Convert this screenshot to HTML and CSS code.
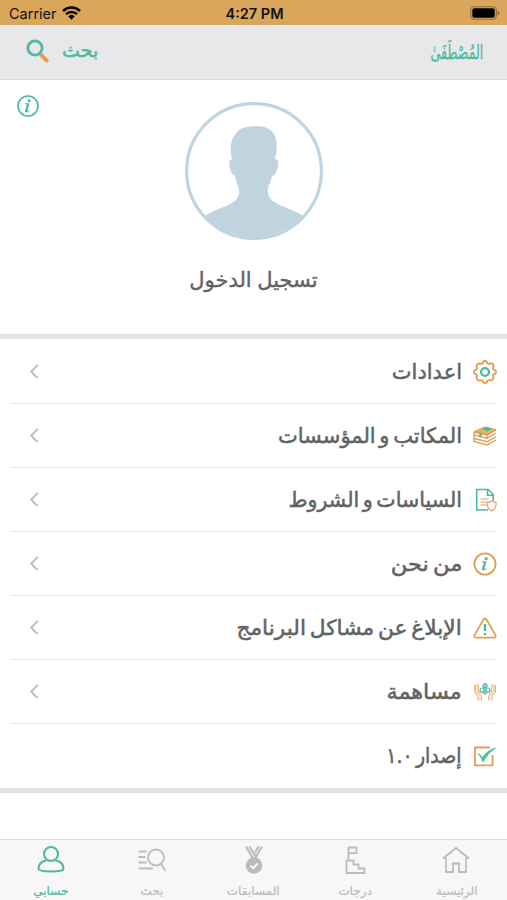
FILE: index.html
```
<!DOCTYPE html>
<html lang="ar" dir="rtl">
<head>
    <meta charset="UTF-8">
    <meta name="viewport" content="width=device-width, initial-scale=1.0">
    <title>حسابي</title>
    <link rel="stylesheet" href="styles.css">
</head>
<body>
    <div class="app">
        <div class="status-bar" dir="ltr">
            <div class="carrier">
                <span>Carrier</span>
                <svg width="19" height="14" viewBox="0 0 19 14">
                    <path d="M1 5a12.2 12.2 0 0 1 17 0M4 8.2a8 8 0 0 1 11 0" fill="none" stroke="#000" stroke-width="2.5"/>
                    <path d="M6.2 10.3a4.8 4.8 0 0 1 6.6 0L9.5 13.7z"/>
                </svg>
            </div>
            <div class="time">4:27 PM</div>
            <div class="battery">
                <svg width="30" height="14" viewBox="0 0 30 14">
                    <rect x=".7" y=".7" width="25.6" height="12.6" rx="3.6" fill="none" stroke="#8c6c3a" stroke-width="1.1"/>
                    <rect x="2.3" y="2.3" width="22.4" height="9.4" rx="2"/>
                    <path d="M27.5 4.8q2 .8 2 2.2t-2 2.2z" fill="#8c6c3a"/>
                </svg>
            </div>
        </div>

        <div class="header">
            <div class="logo">المُصْطَفَىٰ</div>
            <div class="search">
                <span>بحث</span>
                <svg width="24" height="25" viewBox="0 0 24 25">
                    <path d="M14.8 15.6l6 6" stroke="#e0a052" stroke-width="4" stroke-linecap="round"/>
                    <circle cx="9" cy="9" r="7.1" fill="none" stroke="#4dba9f" stroke-width="2.8"/>
                </svg>
            </div>
        </div>

        <div class="profile">
            <svg class="info" width="24" height="24" viewBox="0 0 24 24">
                <circle cx="12" cy="12" r="10" fill="none" stroke="#4dba9f" stroke-width="1.6"/>
                <path d="M9 9.300h4.600l-2.100 7q-.1.800.6.500l1.600-1-.4 1c-1.500 1.900-4.600 2.300-4.300 0l1.800-6.400-1.900-.3z" fill="#4dba9f"/>
                <circle cx="13.200" cy="6.700" r="1.500" fill="#4dba9f"/>
            </svg>
            <svg class="avatar" width="138" height="138" viewBox="0 0 138 138">
                <circle cx="69" cy="69" r="67.4" fill="#fff" stroke="#c0d4df" stroke-width="3.2"/>
                <path d="M20 114C32 105 52 104 54 92C55 85 51 82 50 74C45 73 43 60 45 58L47 57C45 49 45 38 50 33C52 28 58 25 66 24.500C75 23 85 25 89 32C93 38 92 49 90 57L93 58C94 62 92 73 87 74C86 81 82 84 83 91C85 104 106 105 118 114A67.400 67.400 0 0 1 20 114Z" fill="#c0d4df"/>
            </svg>
            <div class="login"><span>تسجيل الدخول</span></div>
        </div>

        <div class="menu">
            <div class="row">
                <svg class="icon" viewBox="0 0 24 24">
                    <path d="M9.800 3.200Q10 1 12 1T14.200 3.200L16 4Q17.900 2.400 19.600 4T20 8l.8 1.800Q23 10 23 12T20.800 14.200L20 16Q21.300 18 19.600 19.600T16 20l-1.800.8Q14 23 12 23T9.800 20.800L8 20Q6.100 21.300 4.400 19.600T4 16l-.8-1.800Q1 14 1 12T3.200 9.800L4 8Q2.700 6 4.400 4.400T8 4Z" class="o"/>
                    <circle cx="12" cy="12" r="3.900" class="g thick"/>
                </svg>
                <span class="label">اعدادات</span>
                <svg class="arrow" viewBox="0 0 10 16"><path d="M9 1L2 8l7 7"/></svg>
            </div>
            <div class="row">
                <svg class="icon" viewBox="0 0 24 24">
                    <path d="M1 7.500L12 3l11 2.500-9 5z" fill="#e8b369" stroke="#e0a052"/>
                    <path d="M9 5l5-2 5 2-5 2.500z" fill="#4dba9f"/>
                    <path d="M1 8v3l13 3.300L23 9M1 11.500v3l13 3.300 9-5M1 15v2.500L14 21l9-5M14 10.500v3.500M1 8l13 3 9-5" class="o books"/>
                    <path d="M7.500 9v4" class="g thick"/>
                </svg>
                <span class="label">المكاتب و المؤسسات</span>
                <svg class="arrow" viewBox="0 0 10 16"><path d="M9 1L2 8l7 7"/></svg>
            </div>
            <div class="row">
                <svg class="icon" viewBox="0 0 24 24">
                    <path d="M15 22H3.700V1.500h11.500l5 5V13M14.500 2v5.300h5" class="g"/>
                    <path d="M7.500 11h8M7.500 14h7M7.500 17h6" class="o thin"/>
                    <path d="M18.700 12.800q2 1.700 4.300 1.700.8 6-4.300 8.500-5.100-2.500-4.300-8.500 2.300 0 4.300-1.700z" fill="#fff" stroke="#e9a568" stroke-width="1.300"/>
                </svg>
                <span class="label terms">السياسات و الشروط</span>
                <svg class="arrow" viewBox="0 0 10 16"><path d="M9 1L2 8l7 7"/></svg>
            </div>
            <div class="row">
                <svg class="icon" viewBox="0 0 24 24">
                    <circle cx="12" cy="12" r="10.600" class="o"/>
                    <path d="M9 9.300h4.600l-2.100 7q-.1.800.6.500l1.600-1-.4 1c-1.500 1.900-4.600 2.300-4.300 0l1.800-6.400-1.900-.3z" fill="#4dba9f"/>
                    <circle cx="13.200" cy="6.700" r="1.600" fill="#4dba9f"/>
                </svg>
                <span class="label about">من نحن</span>
                <svg class="arrow" viewBox="0 0 10 16"><path d="M9 1L2 8l7 7"/></svg>
            </div>
            <div class="row">
                <svg class="icon" viewBox="0 0 24 24">
                    <path d="M10.500 3.500q1.500-2 3 0l9 15.500q.8 2.500-1.500 2.700H3q-2.300-.2-1.500-2.700z" class="o"/>
                    <path d="M12 8v7M12 17v2.200" class="g thick"/>
                </svg>
                <span class="label report">الإبلاغ عن مشاكل البرنامج</span>
                <svg class="arrow" viewBox="0 0 10 16"><path d="M9 1L2 8l7 7"/></svg>
            </div>
            <div class="row">
                <svg class="icon" viewBox="0 0 24 24">
                    <path d="M5 20.500v-4L1.500 12V5.500q1.300-1 1.500.5v4.500L5.500 13l2 1.500q1.500 1.500 1 6M5.300 12V5q-1.300-1-2 0M5.500 11l3 2.500M19 20.500v-4l3.500-4.500V5.500q-1.300-1-1.500.5v4.500L18.500 13l-2 1.500q-1.500 1.500-1 6M18.700 12V5q1.300-1 2 0M18.500 11l-3 2.500" fill="#fae8d1" stroke="#e6b679" stroke-width="1"/>
                    <circle cx="12" cy="5.500" r="2" class="g thin"/>
                    <circle cx="9" cy="10" r="2" class="g thin"/>
                    <circle cx="15" cy="10" r="2" class="g thin"/>
                    <path d="M12 4v11M9 13h6" class="g thin"/>
                </svg>
                <span class="label donate">مساهمة</span>
                <svg class="arrow" viewBox="0 0 10 16"><path d="M9 1L2 8l7 7"/></svg>
            </div>
            <div class="row">
                <svg class="icon" viewBox="0 0 24 24">
                    <path d="M17 3.500H2v17.800h17.500V11" class="o"/>
                    <path d="M5 9.500q3 1.500 4.500 4Q14 6.500 22.500 4 14.500 9 10 18 8.500 13 5 9.500z" fill="#4dba9f" stroke="#4dba9f" stroke-width=".8"/>
                </svg>
                <span class="label version">إصدار ١.٠</span>
            </div>
        </div>

        <div class="tabs">
            <div class="tab">
                <svg width="30" height="30" viewBox="0 0 30 30">
                    <path d="M2 13.500L15 3l13 10.500M5 12.500V27h7v-8.500h6V27h7V12.500"/>
                </svg>
                <span>الرئيسية</span>
            </div>
            <div class="tab">
                <svg width="30" height="30" viewBox="0 0 30 30">
                    <path d="M8.500 15.500V2.500h8v5.700h-8M6.500 15.500h7v4h5v4h6V28h-18z"/>
                </svg>
                <span>درجات</span>
            </div>
            <div class="tab">
                <svg width="30" height="30" viewBox="0 0 30 30">
                    <path d="M7 1.500l7 12M10.500 1.500l6 10M23 1.500l-7 12M19.500 1.500L16 7.500" stroke-width="2.200"/>
                    <circle cx="15" cy="20.500" r="8.300" fill="#bbb" stroke="none"/>
                    <path d="M11.500 20.500l2.700 2.800 4.500-5" class="check"/>
                </svg>
                <span>المسابقات</span>
            </div>
            <div class="tab">
                <svg width="30" height="30" viewBox="0 0 30 30">
                    <circle cx="19" cy="12.500" r="8"/>
                    <path d="M24 19l4.500 7M1.500 6.500h8M1.500 12h7M1.500 17.500h8M1.500 23.500H16"/>
                </svg>
                <span>بحث</span>
            </div>
            <div class="tab active">
                <svg width="30" height="30" viewBox="0 0 30 30">
                    <circle cx="15" cy="9" r="7"/>
                    <path d="M10.500 15.200Q2.500 17 2.500 23.500q0 3 12.500 3t12.500-3Q27.500 17 19.500 15.200"/>
                </svg>
                <span>حسابي</span>
            </div>
        </div>
    </div>
</body>
</html>
```
FILE: styles.css
```
* {
    box-sizing: border-box;
}
body {
    margin: 0;
    font-family: "DejaVu Sans", sans-serif;
    background-color: #fff;
    color: #626264;
}
svg {
    display: block;
    flex-shrink: 0;
}
.app {
    height: 900px;
    display: flex;
    flex-direction: column;
    overflow: hidden;
}
.status-bar {
    height: 25px;
    display: grid;
    grid-template-columns: 1fr auto 1fr;
    align-items: center;
    padding: 2px 7px 0 9px;
    background-color: #d9a65b;
    color: #111;
    font-family: Inter, sans-serif;
    font-size: 14.5px;
}
.carrier {
    display: flex;
    align-items: center;
    gap: 5px;
}
.carrier svg, .battery svg {
    margin-top: -2px;
}
.time {
    font-weight: 600;
}
.battery {
    justify-self: end;
}
.header {
    height: 55px;
    display: flex;
    align-items: center;
    justify-content: space-between;
    padding: 0 24px 2px 26px;
    background-color: #e8e8ea;
    border-bottom: 1px solid #dcdcde;
    color: #4dba9f;
}
.logo {
    font-size: 18px;
    transform: scale(0.7, 1.1);
    transform-origin: right center;
    -webkit-text-stroke: 0.3px #4dba9f;
}
.search {
    display: flex;
    align-items: center;
    gap: 12px;
    font-size: 19px;
    -webkit-text-stroke: 0.5px #4dba9f;
}
.search span {
    margin-top: -3px;
}
.profile {
    position: relative;
    height: 254px;
    display: flex;
    flex-direction: column;
    align-items: center;
    padding-top: 22px;
}
.info {
    position: absolute;
    left: 16px;
    top: 14px;
}
.login {
    margin-top: 24px;
    height: 32px;
    line-height: 32px;
    font-size: 21px;
    word-spacing: -1px;
    -webkit-text-stroke: 0.4px #626264;
}
.menu {
    height: 459px;
    border-top: 5px solid #e4e4e4;
    border-bottom: 5px solid #e4e4e4;
    padding: 1px 10px 0 11px;
}
.row {
    height: 64px;
    display: flex;
    align-items: center;
    border-bottom: 1px solid #e8e8e8;
}
.row:last-child {
    border-bottom: none;
}
.icon {
    width: 24px;
    height: 24px;
    fill: none;
}
.label {
    margin-right: 11px;
    font-size: 21px;
    word-spacing: -3px;
    white-space: nowrap;
    transform-origin: right center;
    -webkit-text-stroke: 0.5px #626264;
}
.terms {
    transform: scaleX(0.98);
}
.about {
    transform: scaleX(1.08);
}
.report {
    transform: scaleX(1.035);
}
.donate {
    transform: scaleX(1.065);
}
.version {
    transform: scaleX(0.9);
}
.arrow {
    width: 10px;
    height: 15px;
    margin: 0 auto 0 18px;
    fill: none;
    stroke: #bbb;
    stroke-width: 2;
}
.o {
    fill: none;
    stroke: #e0a052;
    stroke-width: 1.8;
}
.g {
    fill: none;
    stroke: #4dba9f;
    stroke-width: 1.6;
}
.thick {
    stroke-width: 2.4;
}
.thin {
    stroke-width: 1.2;
}
.books {
    stroke-width: 1.4;
}
.tabs {
    height: 61px;
    margin-top: auto;
    display: grid;
    grid-template-columns: repeat(5, 1fr);
    background-color: #f7f7f7;
    border-top: 1px solid #dcdcdc;
    color: #bbb;
}
.tab {
    display: flex;
    flex-direction: column;
    align-items: center;
    padding-top: 5px;
    font-size: 11.5px;
}
.tab svg {
    fill: none;
    stroke: #bbb;
    stroke-width: 1.8;
}
.tab .check {
    stroke: #fff;
}
.tab span {
    margin-top: 8px;
    line-height: 16px;
    transform: scaleX(1.05);
    -webkit-text-stroke: 0.2px;
}
.tab.active {
    color: #4dba9f;
}
.tab.active svg {
    stroke: #4dba9f;
    stroke-width: 2.1;
}
```
